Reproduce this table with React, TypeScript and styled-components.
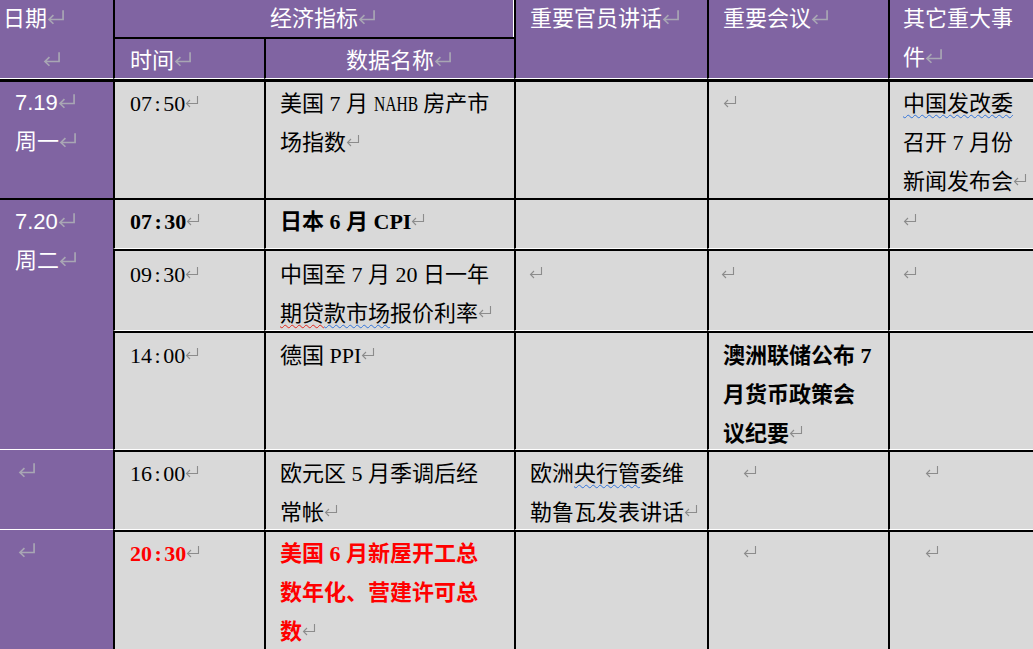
import React from "react";
import styled, { createGlobalStyle } from "styled-components";

const GlobalStyle = createGlobalStyle`
  html, body { margin: 0; padding: 0; background: #ffffff; }
  body { overflow: hidden; }
  #root { width: 1033px; height: 649px; overflow: hidden; }
`;

const PURPLE = "#8064a2";
const GRAY = "#d9d9d9";

const Table = styled.div`
  display: grid;
  grid-template-columns: 113px 151px 250px 193px 181px 165px;
  grid-template-rows: 37px 42px 119px 51px 82px 119px 80px 119px;
  width: 1053px;
`;

interface CellBox {
  $area: string;
  $left?: boolean;
  $top?: number;
  $wb?: boolean;
  $wr?: boolean;
  $pad?: number;
  $pt?: number;
  $center?: boolean;
}

const BaseCell = styled.div<CellBox>`
  box-sizing: border-box;
  grid-area: ${(p) => p.$area};
  border-left: ${(p) => (p.$left ? "2px solid #000" : "0")};
  border-top: ${(p) => (p.$top ? `${p.$top}px solid #000` : "0")};
  border-bottom: ${(p) => (p.$wb ? "1px solid #fff" : "0")};
  border-right: ${(p) => (p.$wr ? "1px solid #fff" : "0")};
  padding: ${(p) => p.$pt ?? 2}px 0 0 ${(p) => p.$pad ?? 14}px;
  text-align: ${(p) => (p.$center ? "center" : "left")};
  white-space: nowrap;
  overflow: hidden;
  line-height: 39px;
  font-size: 22px;
`;

const HeadCell = styled(BaseCell)`
  background: ${PURPLE};
  color: #ffffff;
  font-family: "Noto Sans CJK SC", "Noto Sans", sans-serif;
`;

const DateCell = styled(BaseCell)`
  background: ${PURPLE};
  color: #ffffff;
  font-family: "Liberation Sans", "Noto Sans CJK SC", sans-serif;
`;

const DataCell = styled(BaseCell)`
  background: ${GRAY};
  color: #000000;
  font-family: "Liberation Serif", "Noto Sans CJK SC", serif;
`;

const Lift = styled.div`
  margin-top: -3px;
`;

const Tone = styled.span<{ $tone?: "bold" | "red" }>`
  font-weight: ${(p) => (p.$tone ? 700 : 400)};
  color: ${(p) => (p.$tone === "red" ? "#ff0000" : "#000000")};
`;

const Wavy = styled.span<{ $c: "red" | "blue" }>`
  text-decoration-line: underline;
  text-decoration-style: wavy;
  text-decoration-color: ${(p) => (p.$c === "red" ? "#e0281e" : "#3274da")};
  text-decoration-thickness: 1px;
  text-underline-offset: 3px;
  text-decoration-skip-ink: none;
`;

const Narrow = styled.span`
  display: inline-block;
  transform: scaleX(0.71);
  transform-origin: 0 50%;
  margin-right: -18px;
`;

const Colon = styled.span`
  padding: 0 2.5px;
`;

const ZeroWidth = styled.span`
  display: inline-block;
  width: 0;
  overflow: visible;
  white-space: nowrap;
  text-align: left;
`;

const MarkSvg = styled.svg<{ $big?: boolean; $dim?: boolean }>`
  display: inline-block;
  width: ${(p) => (p.$big ? 18 : 14)}px;
  height: ${(p) => (p.$big ? 16 : 13)}px;
  vertical-align: ${(p) => (p.$big ? 1 : 3)}px;
  fill: none;
  stroke: ${(p) => (p.$dim ? "#a8a6b4" : "#8c8c8c")};
  stroke-width: ${(p) => (p.$big ? 1.3 : 1.1)};
`;

const Mark = ({ big, onPurple }: { big?: boolean; onPurple?: boolean }) => (
  <MarkSvg $big={big} $dim={onPurple} viewBox="0 0 14 13" preserveAspectRatio="none" aria-hidden="true">
    <path d="M12.5 1 V8.5 H1.5 M5 5 L1.5 8.5 L5 12" />
  </MarkSvg>
);

const Time = ({ t }: { t: string }) => {
  const [a, b] = t.split(":");
  return (
    <>
      {a}
      <Colon>:</Colon>
      {b}
    </>
  );
};

export default function App() {
  return (
    <>
      <GlobalStyle />
      <Table>
        {/* header row 1 */}
        <HeadCell $area="1 / 1 / 2 / 2" $pad={3} $pt={0}>
          <Lift>
            日期
            <Mark big onPurple />
          </Lift>
        </HeadCell>
        <HeadCell $area="1 / 2 / 2 / 4" $left $wr $pad={0} $pt={0} $center>
          <Lift>
            经济指标
            <ZeroWidth>
              <Mark big onPurple />
            </ZeroWidth>
          </Lift>
        </HeadCell>
        <HeadCell $area="1 / 4 / 3 / 5" $left $wb $pad={14} $pt={0}>
          <Lift>
            重要官员讲话
            <Mark big onPurple />
          </Lift>
        </HeadCell>
        <HeadCell $area="1 / 5 / 3 / 6" $left $wb $pad={14} $pt={0}>
          <Lift>
            重要会议
            <Mark big onPurple />
          </Lift>
        </HeadCell>
        <HeadCell $area="1 / 6 / 3 / 7" $left $wb $pad={13} $pt={0}>
          <Lift>
            其它重大事
            <br />件
            <Mark big onPurple />
          </Lift>
        </HeadCell>

        {/* header row 2 */}
        <HeadCell $area="2 / 1 / 3 / 2" $wb $pad={43} $pt={2}>
          <Mark big onPurple />
        </HeadCell>
        <HeadCell $area="2 / 2 / 3 / 3" $left $top={2} $wb $pad={15} $pt={0}>
          时间
          <Mark big onPurple />
        </HeadCell>
        <HeadCell $area="2 / 3 / 3 / 4" $left $top={2} $wb $pad={0} $pt={0} $center>
          数据名称
          <ZeroWidth>
            <Mark big onPurple />
          </ZeroWidth>
        </HeadCell>

        {/* row 7.19 */}
        <DateCell $area="3 / 1 / 4 / 2" $top={3} $pad={15} $pt={1}>
          7.19
          <Mark big onPurple />
          <br />
          周一
          <Mark big onPurple />
        </DateCell>
        <DataCell $area="3 / 2 / 4 / 3" $left $top={3} $pad={15}>
          <Time t="07:50" />
          <Mark />
        </DataCell>
        <DataCell $area="3 / 3 / 4 / 4" $left $top={3}>
          美国 7 月 <Narrow>NAHB</Narrow> 房产市
          <br />
          场指数
          <Mark />
        </DataCell>
        <DataCell $area="3 / 4 / 4 / 5" $left $top={3} />
        <DataCell $area="3 / 5 / 4 / 6" $left $top={3}>
          <Mark />
        </DataCell>
        <DataCell $area="3 / 6 / 4 / 7" $left $top={3} $pad={13}>
          <Wavy $c="blue">中国发改委</Wavy>
          <br />
          召开 7 月份
          <br />
          新闻发布会
          <Mark />
        </DataCell>

        {/* 7.20 date column */}
        <DateCell $area="4 / 1 / 7 / 2" $top={2} $wb $pad={15} $pt={2}>
          7.20
          <Mark big onPurple />
          <br />
          周二
          <Mark big onPurple />
        </DateCell>

        {/* row 07:30 */}
        <DataCell $area="4 / 2 / 5 / 3" $left $top={2} $wb $pad={15} $pt={2}>
          <Tone $tone="bold">
            <Time t="07:30" />
          </Tone>
          <Mark />
        </DataCell>
        <DataCell $area="4 / 3 / 5 / 4" $left $top={2} $wb $pt={2}>
          <Tone $tone="bold">日本 6 月 CPI</Tone>
          <Mark />
        </DataCell>
        <DataCell $area="4 / 4 / 5 / 5" $left $top={2} $wb />
        <DataCell $area="4 / 5 / 5 / 6" $left $top={2} $wb />
        <DataCell $area="4 / 6 / 5 / 7" $left $top={2} $wb $pad={13} $pt={2}>
          <Mark />
        </DataCell>

        {/* row 09:30 */}
        <DataCell $area="5 / 2 / 6 / 3" $left $top={2} $wb $pad={15} $pt={4}>
          <Time t="09:30" />
          <Mark />
        </DataCell>
        <DataCell $area="5 / 3 / 6 / 4" $left $top={2} $wb $pt={4}>
          中国至 7 月 20 日一年
          <br />
          <Wavy $c="red">期贷</Wavy>
          <Wavy $c="blue">款市场</Wavy>报价利率
          <Mark />
        </DataCell>
        <DataCell $area="5 / 4 / 6 / 5" $left $top={2} $wb $pad={13} $pt={4}>
          <Mark />
        </DataCell>
        <DataCell $area="5 / 5 / 6 / 6" $left $top={2} $wb $pad={12} $pt={4}>
          <Mark />
        </DataCell>
        <DataCell $area="5 / 6 / 6 / 7" $left $top={2} $wb $pad={13} $pt={4}>
          <Mark />
        </DataCell>

        {/* row 14:00 */}
        <DataCell $area="6 / 2 / 7 / 3" $left $top={2} $wb $pad={15} $pt={3}>
          <Time t="14:00" />
          <Mark />
        </DataCell>
        <DataCell $area="6 / 3 / 7 / 4" $left $top={2} $wb $pt={3}>
          德国 PPI
          <Mark />
        </DataCell>
        <DataCell $area="6 / 4 / 7 / 5" $left $top={2} $wb />
        <DataCell $area="6 / 5 / 7 / 6" $left $top={2} $wb $pt={3}>
          <Tone $tone="bold">
            澳洲联储公布 7
            <br />
            月货币政策会
            <br />
            议纪要
          </Tone>
          <Mark />
        </DataCell>
        <DataCell $area="6 / 6 / 7 / 7" $left $top={2} $wb />

        {/* row 16:00 */}
        <DateCell $area="7 / 1 / 8 / 2" $wb $pad={18} $pt={2}>
          <Mark big onPurple />
        </DateCell>
        <DataCell $area="7 / 2 / 8 / 3" $left $top={2} $wb $pad={15}>
          <Time t="16:00" />
          <Mark />
        </DataCell>
        <DataCell $area="7 / 3 / 8 / 4" $left $top={2} $wb>
          欧元区 5 月季调后经
          <br />
          常帐
          <Mark />
        </DataCell>
        <DataCell $area="7 / 4 / 8 / 5" $left $top={2} $wb>
          欧洲<Wavy $c="blue">央行管</Wavy>委维
          <br />
          勒鲁瓦发表讲话
          <Mark />
        </DataCell>
        <DataCell $area="7 / 5 / 8 / 6" $left $top={2} $wb $pad={34}>
          <Mark />
        </DataCell>
        <DataCell $area="7 / 6 / 8 / 7" $left $top={2} $wb $pad={35}>
          <Mark />
        </DataCell>

        {/* row 20:30 */}
        <DateCell $area="8 / 1 / 9 / 2" $pad={18} $pt={2}>
          <Mark big onPurple />
        </DateCell>
        <DataCell $area="8 / 2 / 9 / 3" $left $top={2} $pad={15}>
          <Tone $tone="red">
            <Time t="20:30" />
          </Tone>
          <Mark />
        </DataCell>
        <DataCell $area="8 / 3 / 9 / 4" $left $top={2}>
          <Tone $tone="red">
            美国 6 月新屋开工总
            <br />
            数年化、营建许可总
            <br />数
          </Tone>
          <Mark />
        </DataCell>
        <DataCell $area="8 / 4 / 9 / 5" $left $top={2} />
        <DataCell $area="8 / 5 / 9 / 6" $left $top={2} $pad={34}>
          <Mark />
        </DataCell>
        <DataCell $area="8 / 6 / 9 / 7" $left $top={2} $pad={35}>
          <Mark />
        </DataCell>
      </Table>
    </>
  );
}
